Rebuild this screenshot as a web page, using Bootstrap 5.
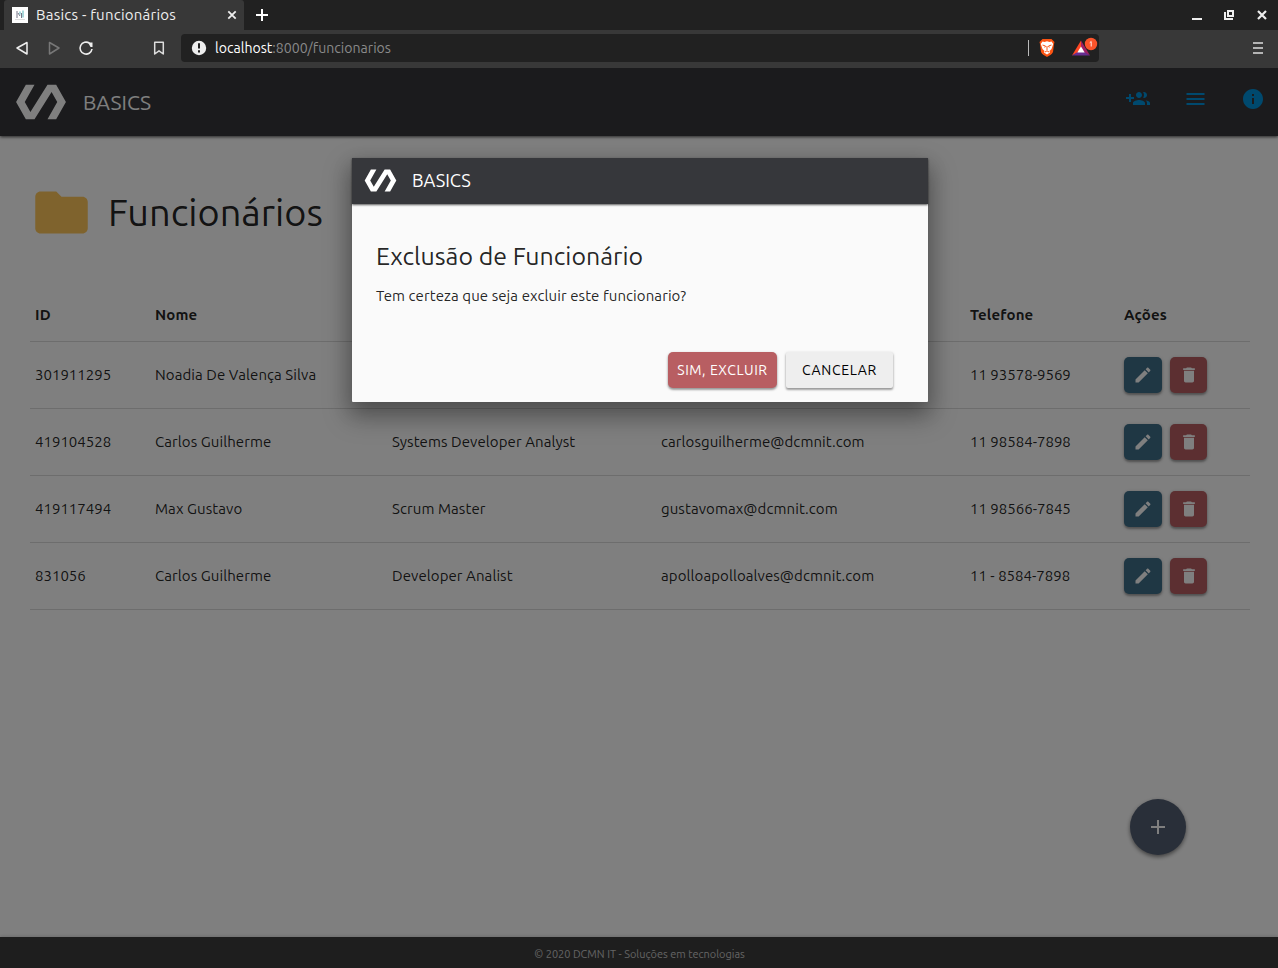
<!DOCTYPE html>
<html lang="pt-BR">
<head>
<meta charset="utf-8">
<meta name="viewport" content="width=device-width, initial-scale=1">
<title>Basics - funcionários</title>
<link href="https://cdn.jsdelivr.net/npm/bootstrap@5.3.0/dist/css/bootstrap.min.css" rel="stylesheet">
<style>
body{height:968px;overflow:hidden;font-family:Ubuntu,"Noto Sans",sans-serif;font-size:15px;color:rgba(0,0,0,.87);background:#383838;line-height:1.5}
svg{display:block;flex:none}
.window-bar{height:30px;background:#212121;padding-left:4px}
.page-tab{width:240px;height:30px;background:#383838;color:#eee;padding:0 7px 0 8px;border-radius:3px 3px 0 0;font-size:15px;letter-spacing:.23px}
.fav-box{width:16px;height:16px;background:#fff;margin-right:8px}
.new-tab{margin-left:12px}
.tool-bar{height:38px;background:#383838;padding:0 0 2px 14px}
.address{width:918px;height:28px;background:#212121;border-radius:4px;padding:0 0 0 10px;color:#8a8a8a;font-size:14.1px;margin-left:14px}
.address span{padding-top:2px}
.address b{font-weight:400;color:#fff}
.viewport{height:900px;position:relative;background:#fff;overflow:hidden}
.app-head{height:68px;background:#36373b;color:#fff;box-shadow:0 1px 3px rgba(0,0,0,.7);padding:0 13px 0 15px}
.brand-big{font-size:21.1px;margin-left:16px;padding-top:1px}
.head-icons{color:#0093dd;gap:33.5px;margin-top:-6px}
.page-body{height:801px;padding:44px 28px 0 30px}
.page-title{font-size:37.9px;font-weight:400;margin:0 0 0 15px;line-height:64px}
.people{width:1220px;margin-top:45px;table-layout:fixed;border-collapse:collapse;letter-spacing:.08px}
.people th,.people td{padding:0 5px;vertical-align:middle;border-bottom:1px solid #dadada;white-space:nowrap}
.people th{height:52px;font-weight:700;letter-spacing:.12px}
.people td{height:67px}
.people td:not(:last-child){padding-top:2px}
.people td:first-child,.people td:nth-child(5){letter-spacing:0}
.c1{width:120px}.c2{width:237px}.c3{width:269px}.c4{width:309px}.c5{width:154px}
.act{height:36px;border-radius:5px;color:#fff;box-shadow:0 2px 2px rgba(0,0,0,.25),0 1px 4px rgba(0,0,0,.22)}
.act-edit{width:38px;background:#3e6e88}
.act-del{width:37px;background:#b85e62}
.fab{position:absolute;left:1130px;top:731px;width:56px;height:56px;border-radius:50%;background:#525e73;box-shadow:0 2px 4px rgba(0,0,0,.5)}
.app-foot{height:31px;background:#3c3c3c;color:#c8c8c8;font-size:10.95px;padding:4px 0 0 1px;box-shadow:0 -1px 3px rgba(0,0,0,.15)}
.shade{position:absolute;inset:0;background:rgba(0,0,0,.5)}
.dialog-box{width:576px;height:244px;margin:90px 0 0 352px;background:#fafafa;box-shadow:0 12px 26px 4px rgba(0,0,0,.27),0 8px 20px rgba(0,0,0,.18);border-radius:1px}
.dialog-head{height:46px;background:#36373b;color:#fff;box-shadow:0 1px 2px rgba(0,0,0,.65);padding:0 0 1px 12px;font-size:18.2px}
.dialog-head span{margin-left:15px}
.dialog-main{padding:34px 24px 0}
.dialog-main h2{font-size:24.9px;font-weight:400;line-height:36px;margin:0}
.dialog-main p{margin:11px 0 0;line-height:22px;letter-spacing:.08px}
.dialog-actions{margin-top:45px;padding-right:11px;gap:9px}
.mbtn{height:36px;border:0;padding:0;border-radius:5px;font-size:14px;letter-spacing:.65px;box-shadow:0 2px 2px rgba(0,0,0,.25),0 1px 3px rgba(0,0,0,.25)}
.mbtn-del{width:109px;background:#b85e62;color:#fff;letter-spacing:.57px}
.mbtn-cancel{width:107px;background:#eee;color:#000;border-radius:2px}
</style>
</head>
<body>
<div class="window-bar d-flex align-items-center">
  <div class="page-tab d-flex align-items-center">
    <div class="fav-box"><svg width="16" height="16"><path d="M5 4v7M6 6l2 3M9.500 6v5" stroke="#778" fill="none"/><path d="M8 4.500v3M11 3.500v7" stroke="#7cc3c6" stroke-width="1.300"/><path d="M3 12.500h10" stroke="#ddd"/></svg></div>
    <span>Basics - funcionários</span>
    <svg class="ms-auto" width="10" height="10" viewBox="0 0 10 10"><path d="M1.300 1.300l7.400 7.400M8.700 1.300L1.300 8.700" stroke="#eee" stroke-width="1.800"/></svg>
  </div>
  <svg class="new-tab" width="12" height="12"><path d="M6 0v12M0 6h12" stroke="#fff" stroke-width="2"/></svg>
  <svg class="ms-auto" width="88" height="30"><path d="M2 19h10" stroke="#eee" stroke-width="2"/><path d="M38 11h5v5h-5zM35 12v7h8" fill="none" stroke="#eee" stroke-width="2"/><path d="M68 11l8 8M76 11l-8 8" stroke="#eee" stroke-width="2.200"/></svg>
</div>
<div class="tool-bar d-flex align-items-center">
  <svg width="153" height="38"><path d="M13 13.500v11.500L3 19z" fill="none" stroke="#eee" stroke-width="1.500" stroke-linejoin="round"/><path d="M35.500 13.500v11.500L45 19z" fill="none" stroke="#777" stroke-width="1.500" stroke-linejoin="round"/><path d="M75.500 14.200A6 6 0 1 0 78 20" fill="none" stroke="#eee" stroke-width="1.600"/><path d="M74 13.500h4.500v4.500h-2z" fill="#eee"/><path d="M140.700 13.300h8.600v11.700l-4.300-3.200-4.300 3.200z" fill="none" stroke="#ddd" stroke-width="1.500" stroke-linejoin="round"/></svg>
  <div class="address d-flex align-items-center">
    <svg width="16" height="16" class="me-2"><circle cx="8" cy="8" r="7.200" fill="#eee"/><path d="M8 3.300v5.200M8 10.300v2.200" stroke="#212121" stroke-width="2"/></svg>
    <span><b>localhost</b>:8000/funcionarios</span>
    <svg class="ms-auto" width="72" height="28">
      <path d="M1.500 6v16" stroke="#bbb"/>
      <path d="M15.500 5h9l1.500 1.500 1.500 1.500-.5 2-1 8c-1 2.500-4 3.500-6 5-2-1.500-5-2.500-6-5l-1-8-.5-2 1.500-1.500z" fill="#fb5413"/>
      <path d="M15.500 7.500l2 .5 2.500-.8 2.500.8 2-.5 1.700 2.500-1.700 5-2 2 .5 1.500-3 2-3-2 .5-1.500-2-2-1.700-5z" fill="#fff"/><path d="M15.500 11l3 1-.8 1.500M24.500 11l-3 1 .8 1.500M20 12v4M18 18l2-1.200 2 1.200" stroke="#fb5413" fill="none"/>
      <path d="M54 6.500L45 21.500l9-4.500z" fill="#ff4724"/><path d="M54 6.500l9 15-9-4.500z" fill="#9e1f63"/><path d="M45 21.500h18L54 16z" fill="#662d91"/><path d="M54 12.500l3.700 6h-7.400z" fill="#fff"/>
      <circle cx="64" cy="10" r="6.200" fill="#fb542b"/><path d="M62.700 8.800l1.500-1.300v5" stroke="#fff" stroke-width=".9" fill="none"/>
    </svg>
  </div>
  <svg class="ms-auto" width="26" height="38"><path d="M1 14h10M1 19h10M1 24h10" stroke="#ddd" stroke-width="1.600"/></svg>
</div>
<div class="viewport">
  <header class="app-head d-flex align-items-center position-relative">
    <svg width="52" height="52" viewBox="0 0 24 24" fill="#fff"><path d="M19 4h-4L7.110 16.630 4.500 12 9 4H5L.5 12 5 20h4l7.890-12.630L19.500 12 15 20h4l4.500-8z"/></svg>
    <span class="brand-big">BASICS</span>
    <div class="head-icons d-flex ms-auto">
      <svg width="24" height="24" fill="currentColor"><path d="M8 10H5V7H3v3H0v2h3v3h2v-3h3v-2zm10 1c1.660 0 2.990-1.340 2.990-3S19.660 5 18 5c-.32 0-.63.05-.91.14.57.81.9 1.790.9 2.860s-.34 2.040-.9 2.860c.28.09.59.14.91.14zm-5 0c1.660 0 2.990-1.340 2.990-3S14.660 5 13 5c-1.660 0-3 1.340-3 3s1.340 3 3 3zm6.620 2.160c.83.73 1.380 1.660 1.380 2.840v2h3v-2c0-1.540-2.370-2.490-4.380-2.840zM13 13c-2 0-6 1-6 3v2h12v-2c0-2-4-3-6-3z"/></svg>
      <svg width="24" height="24" viewBox="0.500 0 24 24" fill="currentColor"><path d="M3 18h18v-2H3v2zm0-5h18v-2H3v2zm0-7v2h18V6H3z"/></svg>
      <svg width="24" height="24" fill="currentColor"><path d="M12 2C6.480 2 2 6.480 2 12s4.480 10 10 10 10-4.480 10-10S17.520 2 12 2zm1 15h-2v-6h2v6zm0-8h-2V7h2v2z"/></svg>
    </div>
  </header>
  <main class="page-body">
    <div class="d-flex align-items-center">
      <svg width="63" height="64" viewBox="0 -0.200 24 24" fill="#ffc65a"><path d="M10 4H4c-1.100 0-1.990.9-1.990 2L2 18c0 1.100.9 2 2 2h16c1.100 0 2-.9 2-2V8c0-1.100-.9-2-2-2h-8l-2-2z"/></svg>
      <h1 class="page-title">Funcionários</h1>
    </div>
    <table class="people">
      <colgroup><col class="c1"><col class="c2"><col class="c3"><col class="c4"><col class="c5"><col></colgroup>
      <thead><tr><th>ID</th><th>Nome</th><th>Cargo</th><th>Email</th><th>Telefone</th><th>Ações</th></tr></thead>
      <tbody id="rows"></tbody>
    </table>
  </main>
  <footer class="app-foot text-center d-flex align-items-center justify-content-center"><span>© 2020 DCMN IT - Soluções em tecnologias</span></footer>
  <div class="fab d-flex align-items-center justify-content-center"><svg width="14" height="14"><path d="M7 0v14M0 7h14" stroke="#fff" stroke-width="2"/></svg></div>
  <div class="shade">
    <section class="dialog-box" role="dialog">
      <div class="dialog-head d-flex align-items-center position-relative">
        <svg width="33" height="33" viewBox="0 0 24 24" fill="#fff"><path d="M19 4h-4L7.110 16.630 4.500 12 9 4H5L.5 12 5 20h4l7.890-12.630L19.500 12 15 20h4l4.500-8z"/></svg>
        <span>BASICS</span>
      </div>
      <div class="dialog-main">
        <h2>Exclusão de Funcionário</h2>
        <p>Tem certeza que seja excluir este funcionario?</p>
        <div class="dialog-actions d-flex justify-content-end">
          <button class="mbtn mbtn-del">SIM, EXCLUIR</button>
          <button class="mbtn mbtn-cancel">CANCELAR</button>
        </div>
      </div>
    </section>
  </div>
</div>
<script>
const people=[
 ["301911295","Noadia De Valença Silva","","","11 93578-9569"],
 ["419104528","Carlos Guilherme","Systems Developer Analyst","carlosguilherme@dcmnit.com","11 98584-7898"],
 ["419117494","Max Gustavo","Scrum Master","gustavomax@dcmnit.com","11 98566-7845"],
 ["831056","Carlos Guilherme","Developer Analist","apolloapolloalves@dcmnit.com","11 - 8584-7898"]];
const pen='<svg width="20" height="20" viewBox="0 0 24 24" fill="currentColor"><path d="M3 17.250V21h3.750L17.810 9.940l-3.750-3.750L3 17.250zM20.710 7.040c.39-.39.39-1.020 0-1.410l-2.340-2.340c-.39-.39-1.020-.39-1.410 0l-1.830 1.830 3.750 3.750 1.830-1.830z"/></svg>';
const bin='<svg width="20" height="20" viewBox="0 0 24 24" fill="currentColor"><path d="M6 19c0 1.100.9 2 2 2h8c1.100 0 2-.9 2-2V7H6v12zM19 4h-3.500l-1-1h-5l-1 1H5v2h14V4z"/></svg>';
document.getElementById("rows").innerHTML=people.map(p=>"<tr>"+p.map(v=>"<td>"+v+"</td>").join("")+
 '<td><div class="d-flex gap-2"><span class="act act-edit d-flex align-items-center justify-content-center">'+pen+'</span><span class="act act-del d-flex align-items-center justify-content-center">'+bin+"</span></div></td></tr>").join("");
</script>
<script src="https://cdn.jsdelivr.net/npm/bootstrap@5.3.0/dist/js/bootstrap.bundle.min.js"></script>
</body>
</html>
